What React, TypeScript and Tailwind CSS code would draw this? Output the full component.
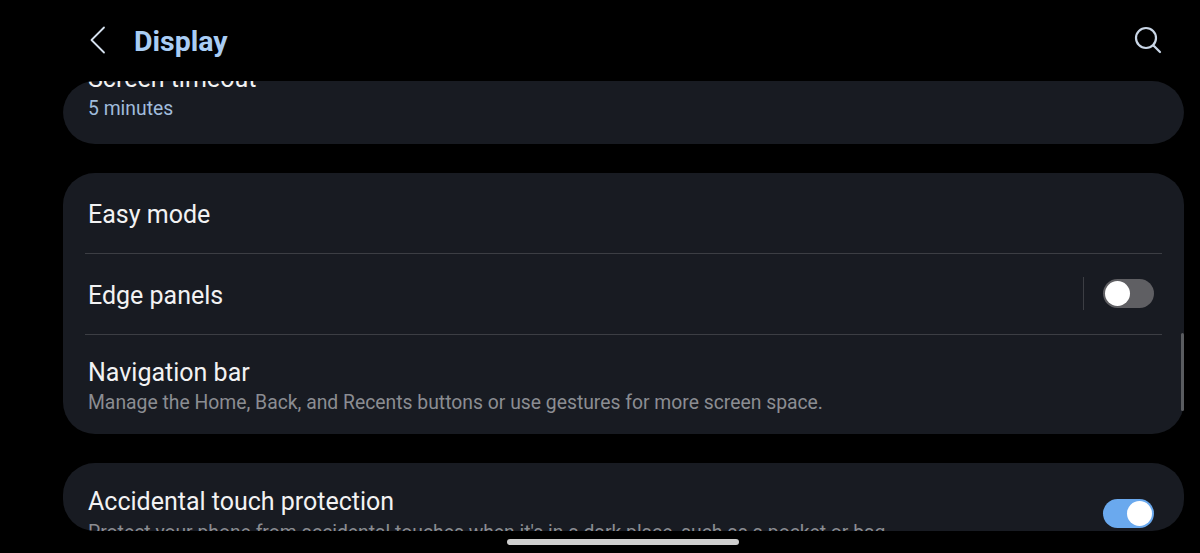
import React from "react";

function Toggle({ on }: { on?: boolean }) {
  return (
    <div className={`flex h-[29px] w-[51px] items-center rounded-full px-[2px] ${on ? "justify-end bg-[#6aa9ee]" : "justify-start bg-[#5f5f63]"}`}>
      <div className="h-[25px] w-[25px] rounded-full bg-white" />
    </div>
  );
}

function Row({ title, sub, subBlue, children, divider, pad, subGap }: { title: string; sub?: string; subBlue?: boolean; children?: React.ReactNode; divider?: boolean; pad: string; subGap?: string }) {
  return (
    <div className="relative flex items-center pl-[25px] pr-[30px]">
      <div className={`min-w-0 flex-1 ${pad}`}>
        <div className="h-[30px] text-[25px] leading-[30px] text-[#f2f2f3]">{title}</div>
        {sub && <div className={`h-[26px] whitespace-nowrap text-[19.33px] leading-[26px] ${subGap ?? "mt-[2px]"} ${subBlue ? "text-[#a0bcdc]" : "text-[#8b8d92]"}`}>{sub}</div>}
      </div>
      {children}
      {divider && <div className="absolute bottom-0 left-[22px] right-[22px] h-px bg-[#3c3e44]" />}
    </div>
  );
}

export default function App() {
  return (
    <div className="flex h-[553px] w-[1200px] flex-col overflow-hidden bg-black font-['Roboto',sans-serif]">
      <header className="flex h-[81px] shrink-0 items-center pl-[88px] pr-[38px]">
        <svg width="20" height="28" viewBox="0 0 20 28" fill="none" stroke="#d5e1ef" strokeWidth="1.8" strokeLinecap="round" strokeLinejoin="round" className="mb-[2px]">
          <path d="M16 1.5 3.5 14 16 26.5" />
        </svg>
        <h1 className="ml-[26px] mt-[4px] flex-1 text-[28.5px] font-bold leading-none text-[#a9cdf4]">Display</h1>
        <svg width="28" height="28" viewBox="0 0 28 28" fill="none" stroke="#c9d6e6" strokeWidth="2.2" strokeLinecap="round" className="mb-[2px]">
          <circle cx="12" cy="12" r="10" />
          <path d="m19.5 19.5 6.5 6.5" />
        </svg>
      </header>
      <div className="relative ml-[63px] mr-[16px] h-[450px] shrink-0 overflow-hidden rounded-[32px]">
        <div className="-mt-[40px] flex flex-col gap-[29px]">
          <section className="overflow-hidden rounded-[32px] bg-[#181b22]">
            <Row title="Screen timeout" sub="5 minutes" subBlue pad="pt-[23px] pb-[22px]" />
          </section>
          <section className="overflow-hidden rounded-[32px] bg-[#181b22]">
            <Row title="Easy mode" divider pad="pt-[27px] pb-[24px]" />
            <Row title="Edge panels" divider pad="pt-[27px] pb-[24px]">
              <div className="flex items-center pb-[2px]">
                <div className="mr-[19px] h-[33px] w-px bg-[#3c3e44]" />
                <Toggle />
              </div>
            </Row>
            <Row title="Navigation bar" sub="Manage the Home, Back, and Recents buttons or use gestures for more screen space." pad="pt-[23px] pb-[18px]" />
          </section>
          <section className="rounded-[32px] bg-[#181b22]">
            <Row title="Accidental touch protection" sub="Protect your phone from accidental touches when it's in a dark place, such as a pocket or bag." pad="pt-[24px] pb-[19px]" subGap="mt-[3px]">
              <div className="self-start pt-[36px]"><Toggle on /></div>
            </Row>
          </section>
        </div>
        <div className="absolute right-0 top-[252px] h-[78px] w-[3px] rounded-full bg-[#5a5c60]" />
      </div>
      <div className="flex flex-1 items-start justify-center pt-[8px]">
        <div className="ml-[46px] h-[6px] w-[232px] rounded-full bg-[#cfcfcf]" />
      </div>
    </div>
  );
}
